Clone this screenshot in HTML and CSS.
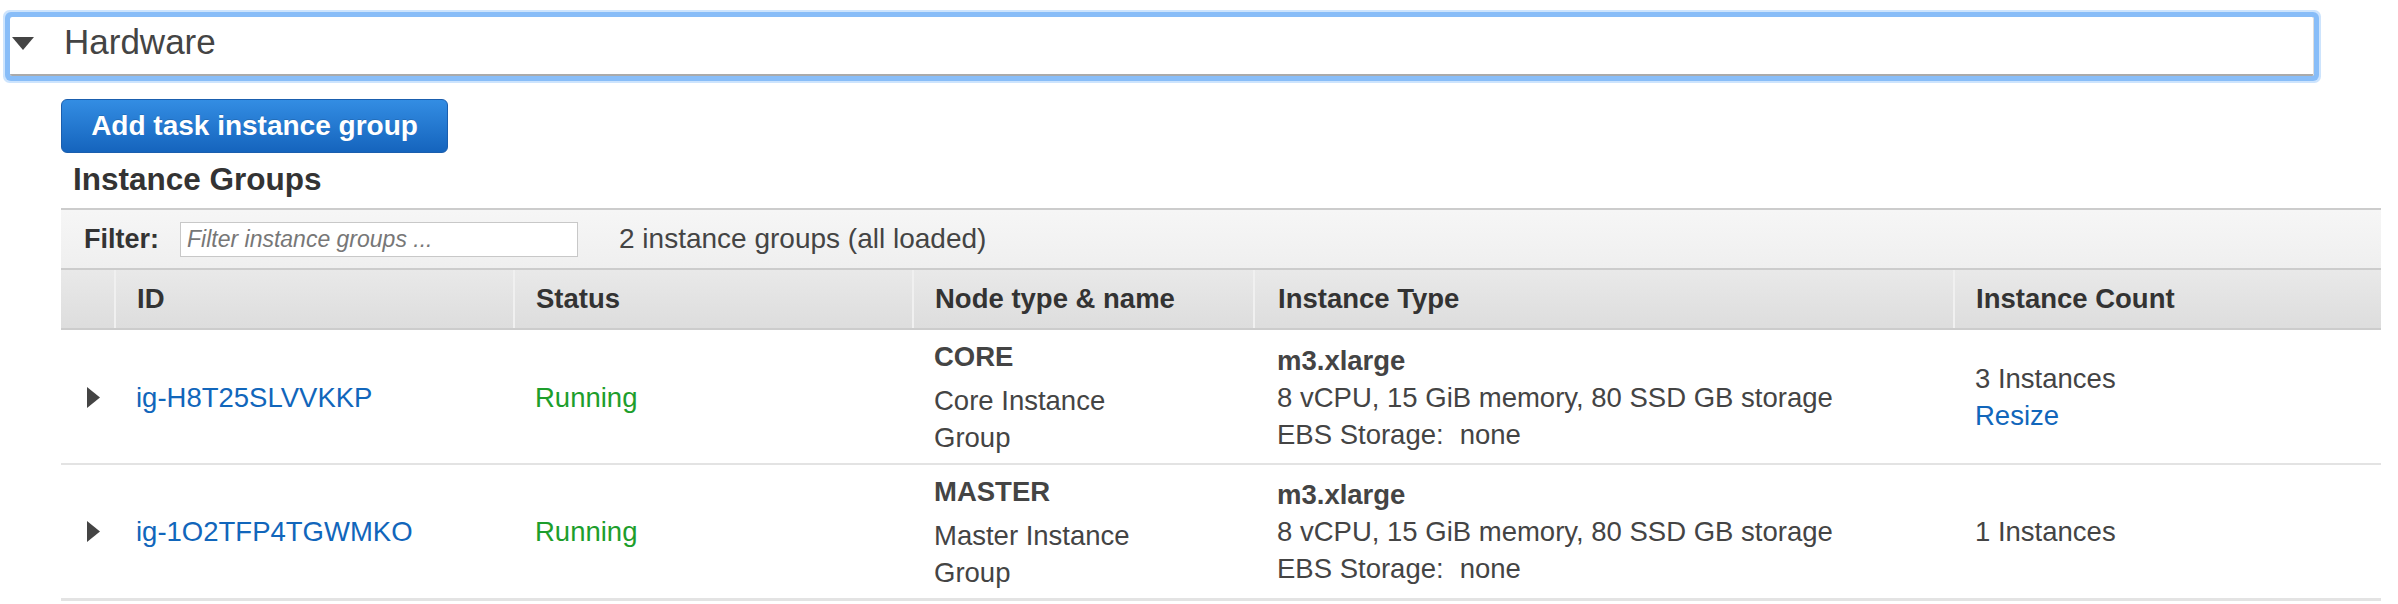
FILE: index.html
```html
<!DOCTYPE html>
<html lang="en">
<head>
<meta charset="utf-8">
<title>Hardware</title>
<link rel="stylesheet" href="styles.css">
</head>
<body>
<div class="panel">
  <div class="panel-header">
    <svg class="caret-down" width="22" height="13" viewBox="0 0 22 13"><path d="M0 0H22L11 13Z"/></svg>
    <span class="panel-title">Hardware</span>
  </div>
  <div class="panel-body">
    <button class="btn-primary" type="button">Add task instance group</button>
    <h2 class="section-title">Instance Groups</h2>
    <div class="table-wrap">
      <div class="filter-bar">
        <label class="filter-label" for="flt">Filter:</label>
        <input id="flt" class="filter-input" type="text" placeholder="Filter instance groups ...">
        <span class="filter-count">2 instance groups (all loaded)</span>
      </div>
      <table class="grid">
        <colgroup>
          <col class="c-exp"><col class="c-id"><col class="c-status"><col class="c-node"><col class="c-type"><col class="c-count">
        </colgroup>
        <thead>
          <tr>
            <th></th>
            <th>ID</th>
            <th>Status</th>
            <th>Node type &amp; name</th>
            <th>Instance Type</th>
            <th>Instance Count</th>
          </tr>
        </thead>
        <tbody>
          <tr>
            <td class="exp"><svg class="caret-right" width="13" height="21" viewBox="0 0 13 21"><path d="M0 0L13 10.5L0 21Z"/></svg></td>
            <td><a class="link" href="#">ig-H8T25SLVVKKP</a></td>
            <td><span class="ok">Running</span></td>
            <td><div class="node-type">CORE</div><div class="node-name">Core Instance Group</div></td>
            <td><div class="type-name">m3.xlarge</div><div>8 vCPU, 15 GiB memory, 80 SSD GB storage</div><div><span class="ebs-label">EBS Storage:</span>none</div></td>
            <td><div>3 Instances</div><div><a class="link" href="#">Resize</a></div></td>
          </tr>
          <tr>
            <td class="exp"><svg class="caret-right" width="13" height="21" viewBox="0 0 13 21"><path d="M0 0L13 10.5L0 21Z"/></svg></td>
            <td><a class="link" href="#">ig-1O2TFP4TGWMKO</a></td>
            <td><span class="ok">Running</span></td>
            <td><div class="node-type">MASTER</div><div class="node-name">Master Instance Group</div></td>
            <td><div class="type-name">m3.xlarge</div><div>8 vCPU, 15 GiB memory, 80 SSD GB storage</div><div><span class="ebs-label">EBS Storage:</span>none</div></td>
            <td><div>1 Instances</div></td>
          </tr>
        </tbody>
      </table>
    </div>
  </div>
</div>
</body>
</html>
```
FILE: styles.css
```css
* { box-sizing: border-box; }

html, body {
  margin: 0;
  padding: 0;
  background: #fff;
}

body {
  font-family: "Liberation Sans", Arial, Helvetica, sans-serif;
  color: #444;
  font-size: 27.5px;
}

.panel-header {
  margin: 17px 84px 0 10px;
  height: 59px;
  border-bottom: 2px solid #aaa;
  border-right: 1px solid #ddd;
  border-radius: 2px;
  box-shadow: 0 0 0 5px #88bdf8, 0 0 0 7px #cde4fd;
  display: flex;
  align-items: center;
}

.caret-down {
  fill: #444;
  margin: 0 0 4px 2px;
  flex: none;
}

.panel-title {
  margin: 0 0 8px 30px;
  font-size: 35px;
  color: #444;
  line-height: 40px;
}

.panel-body {
  padding: 0 17px 0 61px;
}

.btn-primary {
  display: block;
  margin-top: 23px;
  height: 54px;
  width: 387px;
  padding: 0;
  border: 1px solid #1a5eae;
  border-radius: 6px;
  background: linear-gradient(#338de3, #1564bd);
  color: #fff;
  font-family: "Liberation Sans", Arial, Helvetica, sans-serif;
  font-weight: bold;
  font-size: 28px;
  text-shadow: 0 -1px 0 rgba(0, 0, 0, 0.15);
}

.section-title {
  margin: 6px 0 0 12px;
  font-size: 31.5px;
  line-height: 40px;
  font-weight: bold;
  color: #333;
}

.table-wrap {
  margin-top: 9px;
}

.filter-bar {
  height: 60px;
  border-top: 2px solid #cccccc;
  background: linear-gradient(#f6f6f6, #efefef);
  display: flex;
  align-items: center;
  padding-left: 23px;
}

.filter-label {
  font-weight: bold;
  font-size: 27px;
  color: #333;
}

.filter-input {
  margin-left: 21px;
  width: 398px;
  height: 35px;
  border: 1px solid #c8c8c8;
  background: #fff;
  padding: 0 6px;
  font-family: "Liberation Sans", Arial, Helvetica, sans-serif;
  font-size: 23px;
  font-style: italic;
  color: #444;
}

.filter-input::placeholder {
  color: #777;
  font-style: italic;
}

.filter-count {
  margin-left: 41px;
  font-size: 28px;
  color: #444;
}

.grid {
  width: 100%;
  border-collapse: collapse;
  table-layout: fixed;
}

.c-exp { width: 54px; }
.c-id { width: 399px; }
.c-status { width: 399px; }
.c-node { width: 341px; }
.c-type { width: 700px; }
.c-count { width: 427px; }

.grid th {
  height: 60px;
  padding: 0 21px;
  text-align: left;
  font-weight: bold;
  font-size: 27.5px;
  color: #333;
  background: linear-gradient(#e9e9e9, #dddddd);
  border-top: 2px solid #cccccc;
  border-bottom: 2px solid #cccccc;
  border-left: 2px solid #f0f0f0;
}

.grid th:first-child {
  border-left: none;
}

.grid th:nth-child(5) {
  padding-left: 23px;
}

.grid td {
  height: 135px;
  padding: 1px 21px 0;
  vertical-align: middle;
  line-height: 37px;
  border-bottom: 2px solid #e3e3e3;
  color: #444;
}

.grid td:nth-child(5) {
  padding-left: 23px;
}

.grid tbody tr:last-child td {
  border-bottom: 3px solid #e3e3e3;
}

.grid td.exp {
  padding: 1px 0 0 26px;
}

.caret-right {
  display: block;
  fill: #444;
}

.link {
  color: #1166bb;
  text-decoration: none;
}

.ok {
  color: #1d9e2c;
}

.node-type {
  font-weight: bold;
  color: #444;
  margin-bottom: 7px;
}

.node-name {
  max-width: 240px;
}

.type-name {
  font-weight: bold;
  color: #444;
}

.ebs-label {
  margin-right: 16px;
}
```
